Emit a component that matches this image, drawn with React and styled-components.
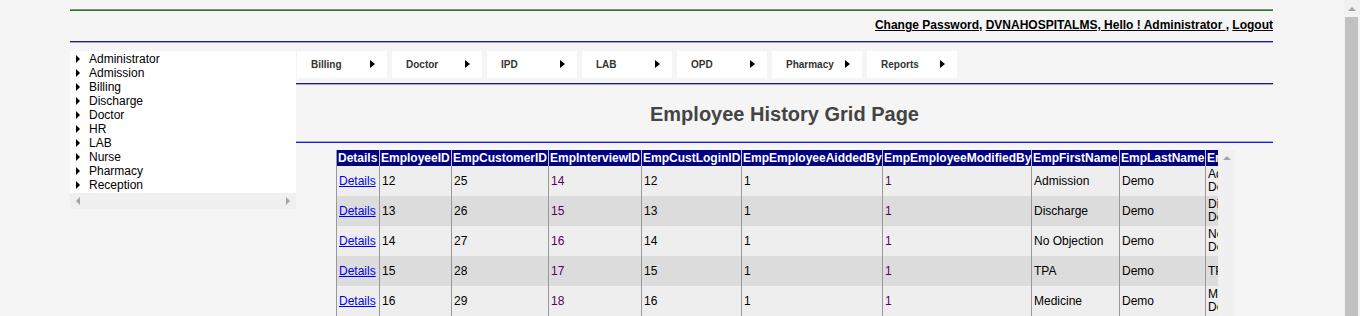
import React from "react"
import styled, { createGlobalStyle } from "styled-components"

const GlobalStyle = createGlobalStyle`
  html, body {
    margin: 0;
    padding: 0;
    height: 100%;
    overflow: hidden;
    background: #f5f5f5;
  }
  body {
    font-family: "Liberation Sans", Arial, sans-serif;
    color: #000;
  }
`

const Screen = styled.div`
  display: flex;
  height: 316px;
`
const Page = styled.div`
  flex: 1;
  min-width: 0;
  padding-top: 9px;
`
const Wrapper = styled.div`
  width: 1203px;
  margin-left: 70px;
`
const Rule = styled.div`
  height: 0;
  border-top: 1px solid ${(p) => p.$top};
  border-bottom: 1px solid ${(p) => p.$bottom};
`
const TopBar = styled.div`
  height: 30px;
  display: flex;
  justify-content: flex-end;
  align-items: center;
  font-size: 12px;
  font-weight: bold;
  padding-bottom: 2px;
  box-sizing: border-box;
`
const TopLink = styled.a`
  color: #000;
  text-decoration: underline;
  cursor: pointer;
  white-space: pre;
`
const Body = styled.div`
  display: flex;
  margin-top: 8px;
`
const Tree = styled.div`
  width: 226px;
  flex: none;
  align-self: flex-start;
  background: #fff;
`
const TreeList = styled.ul`
  list-style: none;
  margin: 0;
  padding: 1px 0 1px 6px;
`
const TreeItem = styled.li`
  display: flex;
  align-items: center;
  height: 14px;
  font-size: 12px;
  gap: 9px;
`
const Arrow = styled.span`
  width: 0;
  height: 0;
  flex: none;
  border-top: ${(p) => p.$h}px solid transparent;
  border-bottom: ${(p) => p.$h}px solid transparent;
  border-left: ${(p) => (p.$left ? 0 : `${p.$w}px solid ${p.$color}`)};
  border-right: ${(p) => (p.$left ? `${p.$w}px solid ${p.$color}` : 0)};
`
const HScroll = styled.div`
  height: 16px;
  background: #f0f0f0;
  display: flex;
  align-items: center;
  justify-content: space-between;
  padding: 0 6px;
`
const Main = styled.div`
  flex: 1;
  min-width: 0;
`
const Menu = styled.div`
  display: flex;
  gap: 5px;
  padding-left: 1px;
`
const MenuItem = styled.div`
  width: 90px;
  height: 27px;
  box-sizing: border-box;
  background: #fff;
  display: flex;
  align-items: center;
  justify-content: space-between;
  padding: 0 12px 1px 14px;
  font-size: 10px;
  font-weight: bold;
  color: #333;
`
const MenuGap = styled.div`
  height: 5px;
`
const Title = styled.h2`
  margin: 0;
  height: 56px;
  display: flex;
  align-items: center;
  justify-content: center;
  font-size: 20px;
  font-weight: bold;
  color: #444;
  padding-top: 2px;
  box-sizing: border-box;
`
const GridBox = styled.div`
  display: flex;
  width: 899px;
  margin: 7px 0 0 40px;
  height: 200px;
`
const GridView = styled.div`
  width: 882px;
  overflow: hidden;
`
const VScroll = styled.div`
  width: 17px;
  background: #f0f0f0;
  display: flex;
  justify-content: center;
  padding-top: 6px;
  box-sizing: border-box;
`
const UpArrow = styled.span`
  width: 0;
  height: 0;
  border-left: 4px solid transparent;
  border-right: 4px solid transparent;
  border-bottom: 4px solid #a3a3a3;
`
const Table = styled.table`
  border-collapse: collapse;
  table-layout: fixed;
  width: 929px;
  font-size: 12px;
  border-left: 1px solid #999;
`
const Th = styled.th`
  background: #000080;
  color: #fff;
  font-weight: bold;
  text-align: left;
  height: 16px;
  padding: 0 1px;
  white-space: nowrap;
  border-right: 1px solid #c8c8d8;
`
const Tr = styled.tr`
  background: ${(p) => (p.$alt ? "#dcdcdc" : "#eeeeee")};
`
const Td = styled.td`
  height: 30px;
  padding: 0 2px;
  vertical-align: middle;
  border-right: 1px solid #999;
  color: ${(p) => p.$color || "#000"};
  line-height: 13px;
  white-space: nowrap;
  overflow: hidden;
`
const DetailsLink = styled.a`
  color: #0000ee;
  text-decoration: underline;
  cursor: pointer;
`
const PageScroll = styled.div`
  width: 16px;
  flex: none;
  background: #f1f1f1;
  display: flex;
  flex-direction: column;
  align-items: center;
`
const ScrollButton = styled.div`
  height: 17px;
  display: flex;
  align-items: center;
  justify-content: center;
`
const Thumb = styled.div`
  flex: 1;
  align-self: stretch;
  margin: 0 2px 0 1px;
  background: #c1c1c1;
`

const treeItems = [
  "Administrator",
  "Admission",
  "Billing",
  "Discharge",
  "Doctor",
  "HR",
  "LAB",
  "Nurse",
  "Pharmacy",
  "Reception",
]

const menuItems = ["Billing", "Doctor", "IPD", "LAB", "OPD", "Pharmacy", "Reports"]

const columns = [
  ["Details", 43],
  ["EmployeeID", 72],
  ["EmpCustomerID", 97],
  ["EmpInterviewID", 93],
  ["EmpCustLoginID", 100],
  ["EmpEmployeeAiddedBy", 141],
  ["EmpEmployeeModifiedBy", 149],
  ["EmpFirstName", 88],
  ["EmpLastName", 86],
  ["EmpFullName", 60],
]

const rows = [
  [12, 25, 14, 12, 1, 1, "Admission", "Demo", ["Admission", "Demo"]],
  [13, 26, 15, 13, 1, 1, "Discharge", "Demo", ["Discharge", "Demo"]],
  [14, 27, 16, 14, 1, 1, "No Objection", "Demo", ["No Objection", "Demo"]],
  [15, 28, 17, 15, 1, 1, "TPA", "Demo", ["TPA"]],
  [16, 29, 18, 16, 1, 1, "Medicine", "Demo", ["Medicine", "Demo"]],
]

const purple = "#5a005a"

const App = () => {
  return (
    <Screen>
      <GlobalStyle />
      <Page>
        <Wrapper>
          <Rule $top="#8a8a8a" $bottom="#2a7a2a" />
          <TopBar>
            <TopLink>Change Password</TopLink>,&nbsp;
            <TopLink>DVNAHOSPITALMS, Hello ! Administrator </TopLink>,&nbsp;
            <TopLink>Logout</TopLink>
          </TopBar>
          <Rule $top="#1a1aa0" $bottom="#a8a8b8" />
          <Body>
            <Tree>
              <TreeList>
                {treeItems.map((item) => (
                  <TreeItem key={item}>
                    <Arrow $w={4} $h={4} $color="#000" />
                    {item}
                  </TreeItem>
                ))}
              </TreeList>
              <HScroll>
                <Arrow $left $w={4} $h={4} $color="#a3a3a3" />
                <Arrow $w={4} $h={4} $color="#a3a3a3" />
              </HScroll>
            </Tree>
            <Main>
              <Menu>
                {menuItems.map((item) => (
                  <MenuItem key={item}>
                    {item}
                    <Arrow $w={5} $h={4} $color="#000" />
                  </MenuItem>
                ))}
              </Menu>
              <MenuGap />
              <Rule $top="#1a1aa0" $bottom="#a8a8b8" />
              <Title>Employee History Grid Page</Title>
              <Rule $top="#a8a8b8" $bottom="#1a1af0" />
              <GridBox>
                <GridView>
                  <Table>
                    <colgroup>
                      {columns.map(([name, w]) => (
                        <col key={name} style={{ width: w }} />
                      ))}
                    </colgroup>
                    <thead>
                      <tr>
                        {columns.map(([name]) => (
                          <Th key={name}>{name}</Th>
                        ))}
                      </tr>
                    </thead>
                    <tbody>
                      {rows.map((r, i) => (
                        <Tr key={r[0]} $alt={i % 2 === 1}>
                          <Td>
                            <DetailsLink>Details</DetailsLink>
                          </Td>
                          <Td>{r[0]}</Td>
                          <Td>{r[1]}</Td>
                          <Td $color={purple}>{r[2]}</Td>
                          <Td>{r[3]}</Td>
                          <Td>{r[4]}</Td>
                          <Td $color={purple}>{r[5]}</Td>
                          <Td>{r[6]}</Td>
                          <Td>{r[7]}</Td>
                          <Td>
                            {r[8].map((line, j) => (
                              <div key={j}>{line}</div>
                            ))}
                          </Td>
                        </Tr>
                      ))}
                    </tbody>
                  </Table>
                </GridView>
                <VScroll>
                  <UpArrow />
                </VScroll>
              </GridBox>
            </Main>
          </Body>
        </Wrapper>
      </Page>
      <PageScroll>
        <ScrollButton>
          <UpArrow />
        </ScrollButton>
        <Thumb />
      </PageScroll>
    </Screen>
  )
}

export default App
